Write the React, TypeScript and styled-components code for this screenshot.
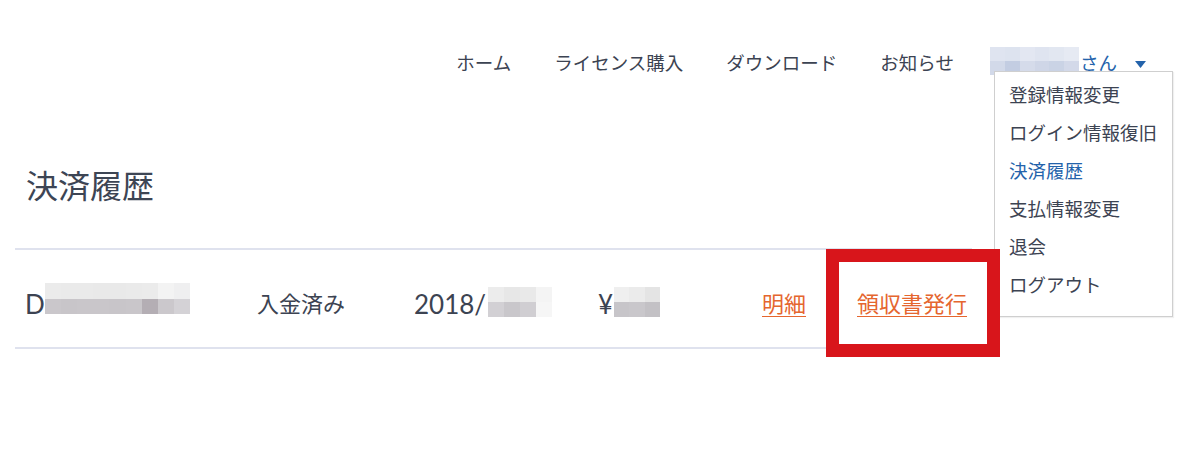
import React from "react";
import styled, { createGlobalStyle } from "styled-components";

const GlobalStyle = createGlobalStyle`
  html, body { margin: 0; padding: 0; background: #ffffff; }
  body {
    font-family: Lato, "Noto Sans CJK JP", sans-serif;
    color: #3c4352;
  }
`;

const Page = styled.div`
  position: relative;
  width: 1200px;
  height: 449px;
  overflow: hidden;
  background: #ffffff;
`;

const Header = styled.header`
  display: flex;
  justify-content: flex-end;
  align-items: center;
  gap: 36px;
  height: 76px;
  box-sizing: border-box;
  padding: 50px 54px 0 0;
`;

const Nav = styled.nav`
  display: flex;
  align-items: center;
  gap: 43px;
`;

const NavLink = styled.a`
  font-size: 18.5px;
  line-height: 26px;
  color: #3c4352;
  text-decoration: none;
  white-space: nowrap;
`;

const UserMenu = styled.div`
  position: relative;
  display: flex;
  align-items: center;
  height: 26px;
`;

const UserName = styled.span`
  margin-left: 1px;
  font-size: 18.5px;
  line-height: 26px;
  color: #2463ab;
  white-space: nowrap;
`;

const Caret = styled.svg`
  margin-left: 18px;
  margin-top: 2px;
  display: block;
`;

const Dropdown = styled.ul`
  position: absolute;
  left: 4px;
  top: 21px;
  z-index: 1;
  width: 179px;
  height: 246px;
  box-sizing: border-box;
  margin: 0;
  padding: 4px 0 12px;
  list-style: none;
  background: #ffffff;
  border: 1px solid #cfcfcf;
  box-shadow: 1px 1px 1px rgba(0, 0, 0, 0.06);
`;

const DropItem = styled.li<{ $active?: boolean }>`
  padding-left: 14px;
  font-size: 18.5px;
  line-height: 38px;
  white-space: nowrap;
  color: ${(p) => (p.$active ? "#2463ab" : "#3c4352")};
`;

const Main = styled.main`
  padding-left: 15px;
`;

const Title = styled.h1`
  margin: 90px 0 0;
  padding-left: 11px;
  font-size: 32px;
  line-height: 40px;
  font-weight: 400;
  color: #3d4554;
`;

const Table = styled.div`
  position: relative;
  width: 957px;
  margin-top: 42px;
  border-top: 2px solid #dfe2ee;
  border-bottom: 2px solid #dfe2ee;
`;

const Row = styled.div`
  display: grid;
  grid-template-columns: 232px 157px 184px 164px 95px 1fr;
  align-items: center;
  height: 97px;
  box-sizing: border-box;
  padding-top: 10px;
`;

const Cell = styled.div`
  display: flex;
  align-items: center;
  padding-left: 10px;
  font-size: 22px;
  line-height: 30px;
  white-space: nowrap;
  color: #3c4352;
`;

const Latin = styled.span`
  font-family: Lato, sans-serif;
  font-size: 26px;
  line-height: 30px;
`;

const TextLink = styled.a`
  color: #e5662f;
  text-decoration: underline;
  text-decoration-thickness: 1px;
  text-underline-offset: 4px;
`;

const MosaicBox = styled.svg<{ $shift: number; $gap?: number }>`
  display: block;
  flex: none;
  margin-top: ${(p) => p.$shift}px;
  margin-left: ${(p) => p.$gap ?? 0}px;
`;

const Highlight = styled.div`
  position: absolute;
  left: 811px;
  top: -1px;
  z-index: 2;
  width: 174px;
  height: 108px;
  box-sizing: border-box;
  border: 13px solid #d8151b;
  pointer-events: none;
`;

type MosaicProps = {
  width: number;
  height: number;
  rows: string[][];
  shift: number;
  gap?: number;
};

function Mosaic({ width, height, rows, shift, gap }: MosaicProps) {
  const rh = height / rows.length;
  return (
    <MosaicBox
      $shift={shift}
      $gap={gap}
      width={width}
      height={height}
      viewBox={`0 0 ${width} ${height}`}
      shapeRendering="crispEdges"
    >
      {rows.map((row, ri) => {
        const cw = width / row.length;
        return row.map((c, ci) => (
          <rect key={`${ri}-${ci}`} x={ci * cw} y={ri * rh} width={cw + 0.5} height={rh + 0.5} fill={c} />
        ));
      })}
    </MosaicBox>
  );
}

const userRows = [
  ["#dfe4f0", "#dde3ef", "#e3e7f2", "#dfe4f0", "#e2e7f1", "#e6eaf3"],
  ["#d2d9e9", "#c3cde2", "#d5dbea", "#cfd6e7", "#cad3e5", "#d3d9e9"],
];
const idRows = [
  ["#ebebeb", "#eaeaea", "#eaeaea", "#e9e9e9", "#e9e9e9", "#eaeaea", "#ebebeb", "#f3f3f3", "#efeff0"],
  ["#cac7cb", "#c8c5c9", "#c9c6ca", "#c9c6ca", "#c8c5c9", "#c9c6ca", "#b4aeb4", "#cbc8cc", "#d4d2d6"],
];
const dateRows = [
  ["#ececec", "#e7e7e7", "#e9e9e9", "#f4f4f4"],
  ["#d2d0d4", "#c9c7cb", "#d0ced2", "#f6f6f6"],
];
const yenRows = [
  ["#efefef", "#ebebeb", "#e4e4e4"],
  ["#c7c5c9", "#c9c7cb", "#c3c1c5"],
];

const menuItems = ["登録情報変更", "ログイン情報復旧", "決済履歴", "支払情報変更", "退会", "ログアウト"];

export default function App() {
  return (
    <Page>
      <GlobalStyle />
      <Header>
        <Nav>
          <NavLink>ホーム</NavLink>
          <NavLink>ライセンス購入</NavLink>
          <NavLink>ダウンロード</NavLink>
          <NavLink>お知らせ</NavLink>
        </Nav>
        <UserMenu>
          <Mosaic width={89} height={28} rows={userRows} shift={-4} />
          <UserName>さん</UserName>
          <Caret width="11" height="7" viewBox="0 0 11 7">
            <polygon points="0,0 11,0 5.5,7" fill="#2463ab" />
          </Caret>
          <Dropdown>
            {menuItems.map((m) => (
              <DropItem key={m} $active={m === "決済履歴"}>
                {m}
              </DropItem>
            ))}
          </Dropdown>
        </UserMenu>
      </Header>
      <Main>
        <Title>決済履歴</Title>
        <Table>
          <Row>
            <Cell>
              <Latin>D</Latin>
              <Mosaic width={145} height={31} rows={idRows} shift={-10} />
            </Cell>
            <Cell>入金済み</Cell>
            <Cell>
              <Latin>2018/</Latin>
              <Mosaic width={64} height={30} rows={dateRows} shift={-4} gap={2} />
            </Cell>
            <Cell>
              <Latin>¥</Latin>
              <Mosaic width={46} height={30} rows={yenRows} shift={-4} gap={1} />
            </Cell>
            <Cell>
              <TextLink>明細</TextLink>
            </Cell>
            <Cell>
              <TextLink>領収書発行</TextLink>
            </Cell>
          </Row>
          <Highlight />
        </Table>
      </Main>
    </Page>
  );
}
